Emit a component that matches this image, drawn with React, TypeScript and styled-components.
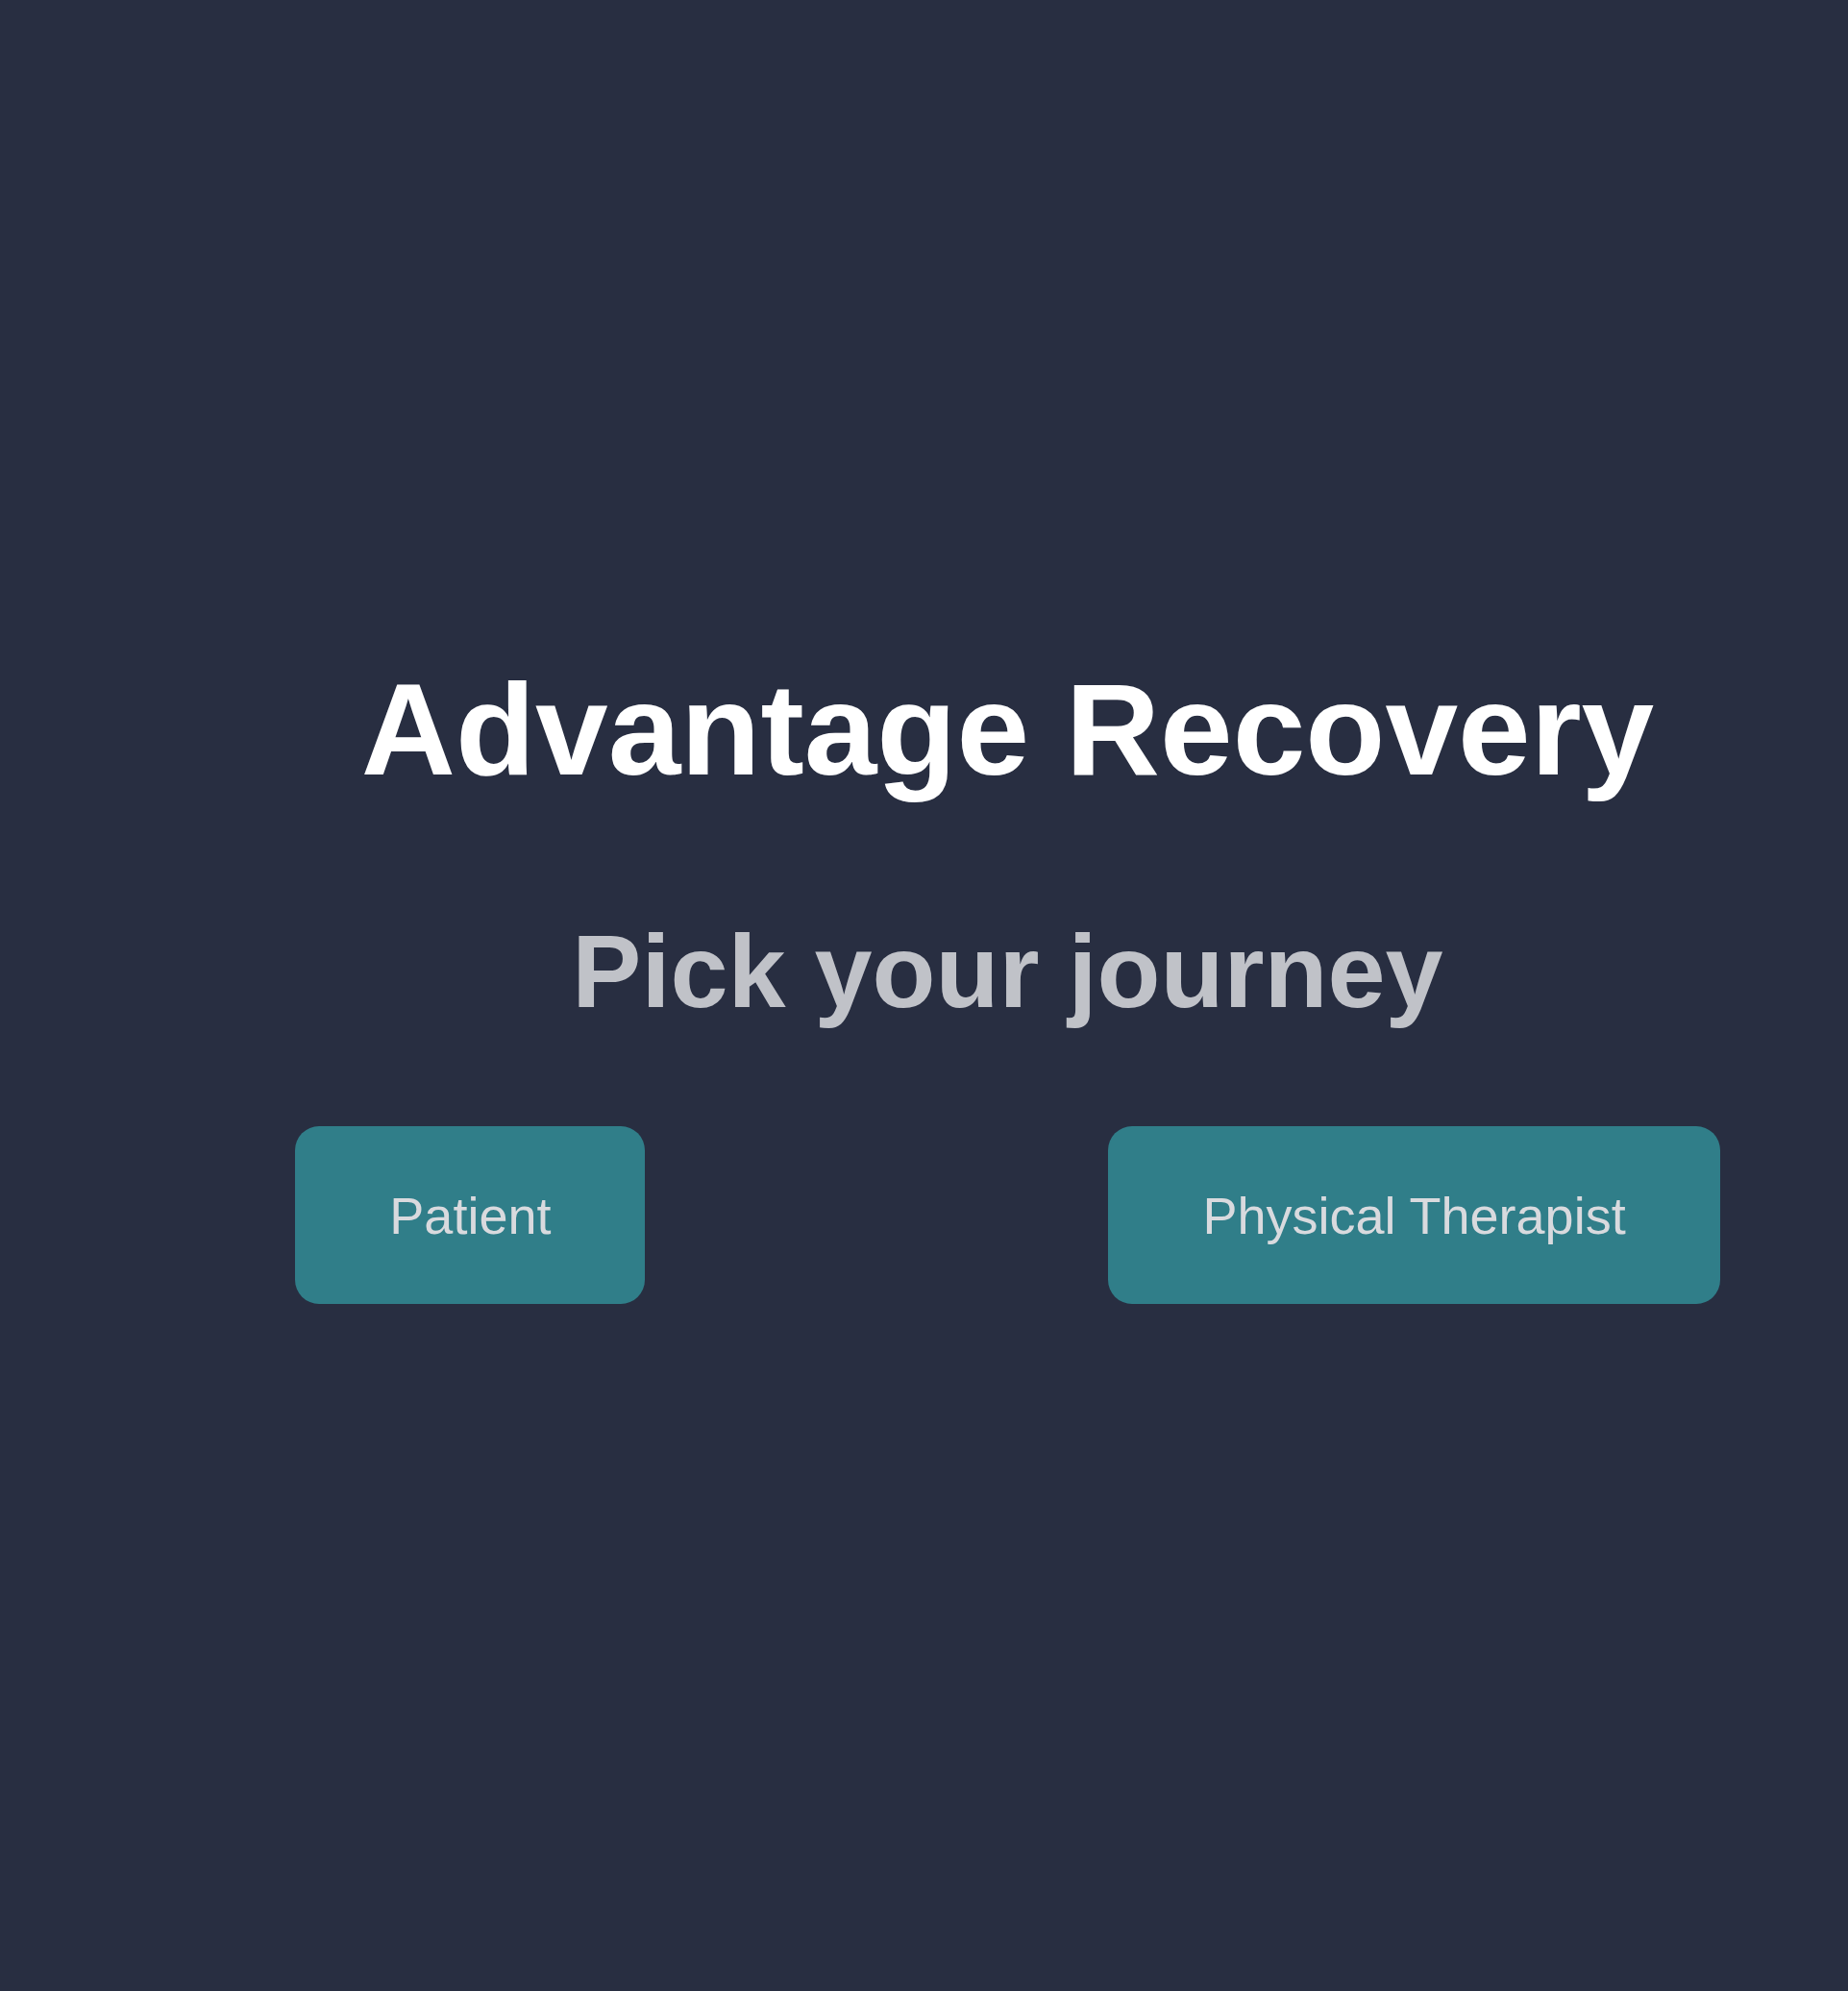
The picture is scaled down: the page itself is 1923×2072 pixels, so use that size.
import React from "react";
import styled, { createGlobalStyle } from "styled-components";

const GlobalStyle = createGlobalStyle`
  html, body {
    margin: 0;
    padding: 0;
    background: #282e41;
  }
  body {
    font-family: "Liberation Sans", Arial, Helvetica, sans-serif;
  }
`;

const Page = styled.div`
  min-height: 2072px;
  background: #282e41;
  box-sizing: border-box;
  padding: 679px 0 0 174px;
  display: flex;
  flex-direction: column;
  align-items: center;
`;

const Title = styled.h1`
  margin: 0;
  font-family: "Liberation Sans", Arial, Helvetica, sans-serif;
  font-weight: 700;
  font-size: 136px;
  line-height: 160px;
  color: #ffffff;
  white-space: nowrap;
`;

const Subtitle = styled.h2`
  margin: 110px 0 0;
  font-family: "Liberation Sans", Arial, Helvetica, sans-serif;
  font-weight: 700;
  font-size: 108px;
  line-height: 124px;
  color: #c0c2c8;
  white-space: nowrap;
`;

const ButtonRow = styled.div`
  margin-top: 99px;
  display: flex;
  gap: 482px;
  justify-content: center;
`;

const JourneyButton = styled.button`
  height: 185px;
  padding: 0 98px;
  border: none;
  border-radius: 25px;
  background: #307e89;
  color: #d9dade;
  font-family: "Liberation Sans", Arial, Helvetica, sans-serif;
  font-size: 54px;
  line-height: 62px;
  white-space: nowrap;
  display: flex;
  align-items: center;
  cursor: pointer;
`;

export default function App() {
  return (
    <>
      <GlobalStyle />
      <Page>
        <Title>Advantage Recovery</Title>
        <Subtitle>Pick your journey</Subtitle>
        <ButtonRow>
          <JourneyButton>Patient</JourneyButton>
          <JourneyButton>Physical Therapist</JourneyButton>
        </ButtonRow>
      </Page>
    </>
  );
}
